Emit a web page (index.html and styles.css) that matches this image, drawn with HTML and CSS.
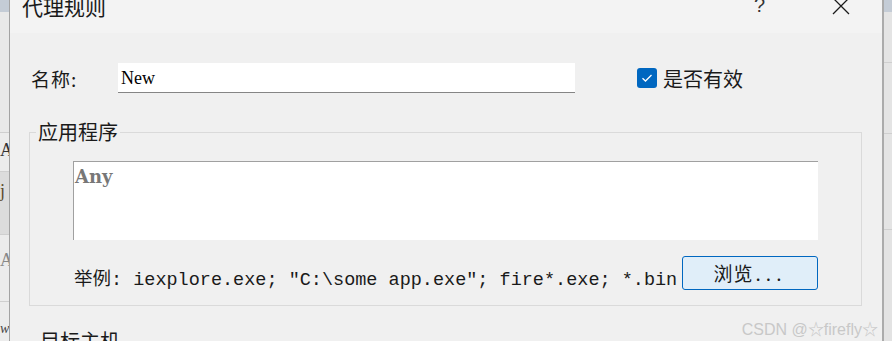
FILE: index.html
```html
<!DOCTYPE html>
<html lang="zh-CN">
<head>
  <meta charset="UTF-8" />
  <title>代理规则</title>
  <link rel="stylesheet" href="styles.css">
</head>
<body>
  <div class="screen">
    <div class="side side-left">
      <div class="strip strip-top"></div>
      <div class="strip s1"></div>
      <div class="strip s2">A</div>
      <div class="strip s3">j</div>
      <div class="strip s4">A</div>
      <div class="strip s5">w</div>
    </div>

    <div class="dialog">
      <div class="titlebar">
        <span class="title">代理规则</span>
        <span class="help">?</span>
        <span class="close">
          <svg width="18" height="18" viewBox="0 0 18 18">
            <path d="M1 1 L17 17 M17 1 L1 17" stroke="#1a1a1a" stroke-width="1.3" fill="none" />
          </svg>
        </span>
      </div>

      <div class="form">
        <div class="row">
          <label class="name-label" for="name">名称:</label>
          <input type="text" id="name" class="name-input" value="New">
          <label class="check">
            <span class="box">
              <svg width="12" height="10" viewBox="0 0 12 10">
                <path d="M1.5 5.2 L4.5 8 L10.5 2" stroke="#fff" stroke-width="1.3" fill="none" />
              </svg>
            </span>
            是否有效
          </label>
        </div>

        <fieldset class="group">
          <legend>应用程序</legend>
          <div class="group-body">
            <div class="apps">Any</div>
            <div class="example-row">
              <span class="example">举例: iexplore.exe; ″C:\some app.exe″; fire*.exe; *.bin</span>
              <button class="browse">浏览<span class="dots">...</span></button>
            </div>
          </div>
        </fieldset>

        <div class="next-label">目标主机</div>
      </div>

      <div class="watermark">CSDN @☆firefly☆</div>
    </div>

    <div class="side side-right">
      <div class="strip strip-top"></div>
      <div class="strip r1"></div>
      <div class="strip r2"></div>
      <div class="strip r3"></div>
    </div>
  </div>
</body>
</html>
```

FILE: styles.css
```css
body {
  margin: 0;
  font-family: "Noto Sans CJK SC", "Liberation Sans", sans-serif;
  background: #f0f0f0;
  color: #1a1a1a;
}
.screen {
  display: flex;
  width: 892px;
  height: 341px;
  overflow: hidden;
}
.side {
  width: 10px;
  flex: none;
  background: #e7e7e7;
  display: flex;
  flex-direction: column;
  overflow: hidden;
}
.side-left {
  width: 9px;
  border-right: 1px solid #a3a3a3;
}
.side-right {
  width: 8px;
  border-left: 2px solid #ababab;
  background: #e3e3e3;
}
.strip {
  flex: none;
  font-family: "Liberation Serif", serif;
  font-size: 18px;
  line-height: 1;
  color: #444;
  overflow: hidden;
  border-bottom: 1px solid #cfcfcf;
}
.strip-top {
  height: 12px;
  background: #c4ccd6;
  border-bottom: none;
}
.s1 { height: 120px; background: #e9e9e9; }
.s2 { height: 30px; padding-top: 8px; background: #ececec; color: #333; }
.s3 { height: 52px; padding-top: 10px; background: #dcdcdc; color: #5a4a2a; }
.s4 { height: 50px; padding-top: 16px; background: #ececec; color: #888; }
.s5 { height: 40px; padding-top: 20px; background: #ececec; font-style: italic; font-size: 14px; }
.r1 { height: 50px; background: #e4e4e4; }
.r2 { height: 70px; background: #e4e4e4; }
.r3 { height: 95px; background: #e4e4e4; }

.dialog {
  flex: 1;
  position: relative;
  background: #f0f0f0;
}
.titlebar {
  height: 33px;
  background: #f3f3f3;
  display: flex;
  align-items: flex-start;
}
.title {
  margin: -5px 0 0 12px;
  font-size: 21px;
  line-height: 22px;
}
.help {
  margin: -6px 0 0 auto;
  font-family: "Liberation Sans", sans-serif;
  font-size: 20px;
  line-height: 22px;
  color: #333;
}
.close {
  margin: -4px 32px 0 67px;
}

.form {
  padding: 0 0 0 19px;
}
.row {
  display: flex;
  align-items: center;
  margin-top: 30px;
  height: 30px;
}
.name-label {
  width: 87px;
  padding-left: 2px;
  font-size: 19px;
  letter-spacing: 1px;
}
.name-input {
  width: 457px;
  height: 30px;
  box-sizing: border-box;
  margin: 0;
  padding: 1px 3px 0;
  border: none;
  border-bottom: 1px solid #858585;
  background: #fff;
  font-family: "Liberation Serif", serif;
  font-size: 18px;
  color: #000;
}
.check {
  display: flex;
  align-items: center;
  gap: 6px;
  margin-left: 62px;
  font-size: 20px;
}
.box {
  width: 20px;
  height: 20px;
  border-radius: 3px;
  background: #0067c0;
  display: flex;
  align-items: center;
  justify-content: center;
}

.group {
  width: 833px;
  margin: 28px 0 0 0;
  padding: 18px 0 14px 0;
  border: 1px solid #dadada;
  box-sizing: border-box;
}
.group legend {
  margin-left: 6px;
  padding: 0 2px;
  font-size: 20px;
  line-height: 22px;
}
.group-body {
  margin-left: 43px;
}
.apps {
  width: 745px;
  height: 79px;
  box-sizing: border-box;
  background: #fff;
  border-top: 1px solid #a0a0a0;
  border-left: 1px solid #a0a0a0;
  padding: 4px 0 0 1px;
  font-family: "DejaVu Serif", serif;
  font-weight: bold;
  font-size: 18px;
  line-height: 22px;
  color: #777;
}
.example-row {
  width: 745px;
  display: flex;
  align-items: center;
  justify-content: space-between;
  margin-top: 14px;
}
.example {
  font-family: "Liberation Mono", "Noto Sans CJK SC", monospace;
  font-size: 18.5px;
  padding-left: 1px;
  padding-top: 10px;
  color: #1a1a1a;
}
.browse {
  width: 136px;
  height: 34px;
  background: #e0eef9;
  border: 1px solid #0067c0;
  border-radius: 3px;
  font-family: "Noto Sans CJK SC", sans-serif;
  font-size: 19px;
  color: #1a1a1a;
  letter-spacing: 1px;
  padding: 0;
}
.dots {
  letter-spacing: 5px;
  margin-left: 2px;
}
.next-label {
  margin: 24px 0 0 11px;
  font-size: 20px;
  line-height: 22px;
}
.watermark {
  position: absolute;
  right: 4px;
  top: 316px;
  font-family: "Liberation Sans", sans-serif;
  font-size: 16px;
  color: #c8c8c8;
}
```
